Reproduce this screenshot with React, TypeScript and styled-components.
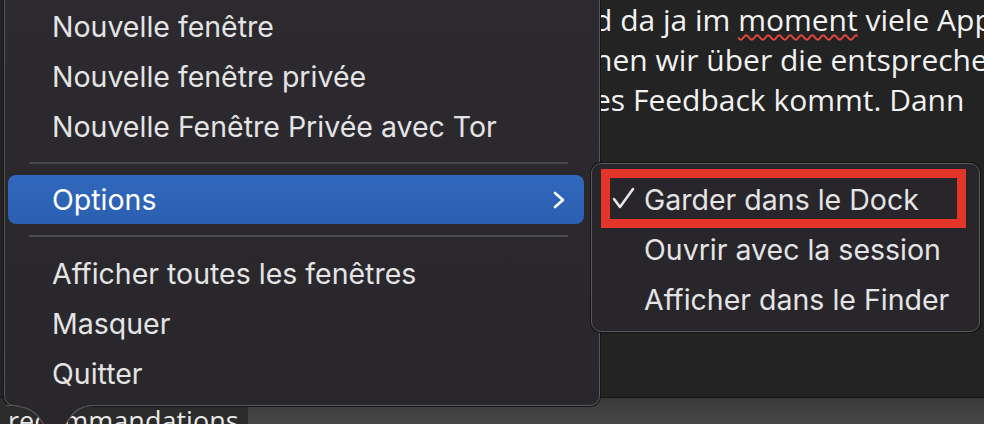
import React from 'react';
import styled, { createGlobalStyle } from 'styled-components';

const GlobalStyle = createGlobalStyle`
  html, body {
    margin: 0;
    padding: 0;
    background: #232323;
    overflow: hidden;
  }
`;

const mainItems: (string | null)[] = [
  'Nouvelle fenêtre',
  'Nouvelle fenêtre privée',
  'Nouvelle Fenêtre Privée avec Tor',
  null,
  'Options',
  null,
  'Afficher toutes les fenêtres',
  'Masquer',
  'Quitter',
];

const subItems = [
  { label: 'Garder dans le Dock', checked: true },
  { label: 'Ouvrir avec la session', checked: false },
  { label: 'Afficher dans le Finder', checked: false },
];

const App: React.FC = () => {
  return (
    <Screen>
      <GlobalStyle />
      <Document>
        <Page>
          <Line>d da ja im <Typo>moment</Typo> viele Apps</Line>
          <Line>hen wir über die entsprechenden</Line>
          <Line>es Feedback kommt. Dann</Line>
        </Page>
        <StatusBar>
          <TabText>recommandations</TabText>
        </StatusBar>
      </Document>

      <Menu>
        {mainItems.map((item, i) =>
          item === null ? (
            <Separator key={i} />
          ) : (
            <MenuItem key={i} $active={item === 'Options'}>
              {item}
              {item === 'Options' && (
                <Chevron viewBox="0 0 14 18" width="14" height="18">
                  <polyline points="3,2 11,9 3,16" fill="none" stroke="#fff" strokeWidth="2.6" strokeLinecap="round" strokeLinejoin="round" />
                </Chevron>
              )}
            </MenuItem>
          )
        )}
        <Pointer viewBox="0 0 90 24" width="90" height="24">
          <path d="M0 0 C 22 0, 30 6, 38 20 L 45 30 L 58 22 C 66 8, 72 0, 90 0 Z" fill="#29272c" />
          <path d="M0 0.5 C 22 0.5, 30 6, 38 20 M58 22 C 66 8, 72 0.5, 90 0.5" fill="none" stroke="#5a595c" strokeWidth="1.2" />
        </Pointer>
      </Menu>

      <SubMenu>
        {subItems.map((s) => (
          <SubItem key={s.label}>
            <CheckSlot>
              {s.checked && (
                <svg viewBox="0 0 24 24" width="24" height="24">
                  <polyline points="2,12 8,20 21,2" fill="none" stroke="#e6e6e6" strokeWidth="2.6" strokeLinecap="round" strokeLinejoin="round" />
                </svg>
              )}
            </CheckSlot>
            {s.label}
          </SubItem>
        ))}
      </SubMenu>

      <Highlight />
    </Screen>
  );
};

export default App;

// Styled Components
const Screen = styled.div`
  position: relative;
  width: 984px;
  height: 424px;
  overflow: hidden;
  background: #232323;
`;

const Document = styled.div`
  display: grid;
  grid-template-rows: 397px 27px;
  height: 424px;
`;

const Page = styled.div`
  display: flex;
  flex-direction: column;
  padding: 0 0 0 594px;
  background: #232323;
  font-family: 'Open Sans', Lato, sans-serif;
  font-size: 30px;
  line-height: 40px;
  color: #f2f2f2;
  white-space: nowrap;
`;

const Line = styled.div`
  height: 40px;
`;

const Typo = styled.span`
  text-decoration: underline wavy #e5473c;
  text-decoration-thickness: 1.5px;
  text-underline-offset: 3px;
`;

const StatusBar = styled.div`
  display: flex;
  align-items: flex-start;
  border-top: 1px solid #161616;
  background: linear-gradient(180deg, #3a3a3a, #474747);
`;

const TabText = styled.div`
  padding: 8px 0 0 8px;
  font-family: 'Open Sans', Lato, sans-serif;
  font-size: 27px;
  line-height: 30px;
  color: #e8e8e8;
  background: #2b2b2b;
  width: 240px;
  height: 26px;
  overflow: hidden;
`;

const Menu = styled.div`
  position: absolute;
  left: 4px;
  top: -11px;
  width: 594px;
  padding: 11px 0 7px;
  background: linear-gradient(180deg, #2c2a2f, #29272c);
  border: 1px solid #58575a;
  border-radius: 10px;
  box-shadow: 0 0 0 1px #151515;
  font-family: Inter, 'Noto Sans', sans-serif;
  font-size: 28.5px;
  color: #e4e4e4;
`;

const MenuItem = styled.div<{ $active?: boolean }>`
  display: flex;
  align-items: center;
  justify-content: space-between;
  height: ${(p) => (p.$active ? '49px' : '50px')};
  margin: 0 15px 0 3px;
  padding: 0 18px 0 44px;
  border-radius: 8px;
  background: ${(p) => (p.$active ? 'linear-gradient(180deg, #3068bd, #2c5fb0)' : 'transparent')};
  color: ${(p) => (p.$active ? '#ffffff' : '#e4e4e4')};
`;

const Chevron = styled.svg`
  display: block;
`;

const Separator = styled.div`
  height: 24px;
  display: flex;
  align-items: center;
  margin: 0 31px 0 24px;

  &::after {
    content: '';
    flex: 1;
    height: 2px;
    background: #4a494c;
  }
`;

const Pointer = styled.svg`
  position: absolute;
  left: 1px;
  bottom: -24px;
`;

const SubMenu = styled.div`
  position: absolute;
  left: 591px;
  top: 163px;
  width: 387px;
  padding: 10px 0 7px;
  background: #28262b;
  border: 1px solid #5a595c;
  border-radius: 10px;
  box-shadow: 0 0 0 1px #141414;
  font-family: Inter, 'Noto Sans', sans-serif;
  font-size: 28.5px;
  color: #e4e4e4;
`;

const SubItem = styled.div`
  display: flex;
  align-items: center;
  height: 50px;
  padding-left: 20px;
`;

const CheckSlot = styled.div`
  width: 32px;
  display: flex;
  align-items: center;
`;

const Highlight = styled.div`
  position: absolute;
  left: 601px;
  top: 169px;
  width: 365px;
  height: 59px;
  box-sizing: border-box;
  border: 9px solid #e3352a;
`;
